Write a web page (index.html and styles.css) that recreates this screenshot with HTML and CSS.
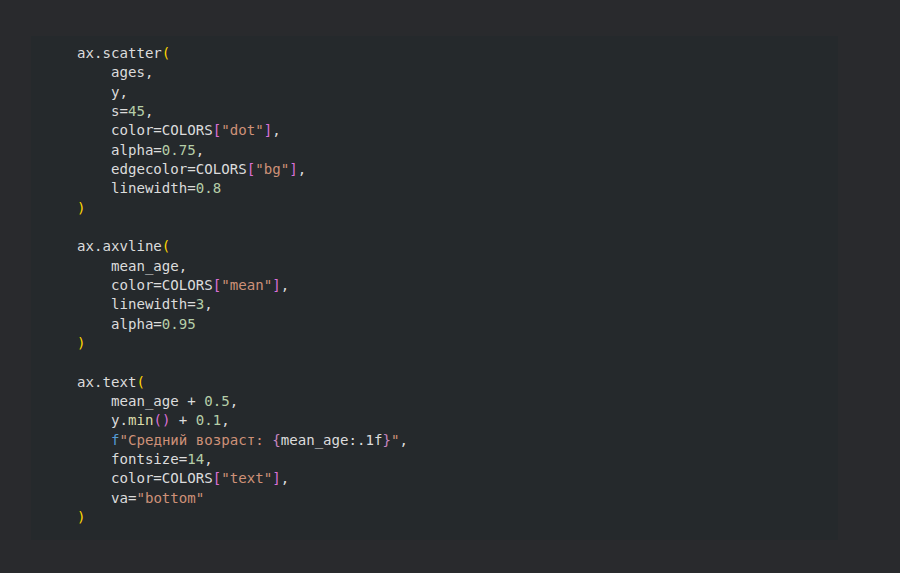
FILE: index.html
```html
<!DOCTYPE html>
<html lang="en">
<head>
<meta charset="utf-8">
<title>Code</title>
<link rel="stylesheet" href="styles.css">
</head>
<body>
<div class="panel">
<pre class="code"><code>ax.scatter<span class="b1">(</span>
    ages,
    y,
    s=<span class="num">45</span>,
    color=COLORS<span class="b2">[</span><span class="str">"dot"</span><span class="b2">]</span>,
    alpha=<span class="num">0.75</span>,
    edgecolor=COLORS<span class="b2">[</span><span class="str">"bg"</span><span class="b2">]</span>,
    linewidth=<span class="num">0.8</span>
<span class="b1">)</span>

ax.axvline<span class="b1">(</span>
    mean_age,
    color=COLORS<span class="b2">[</span><span class="str">"mean"</span><span class="b2">]</span>,
    linewidth=<span class="num">3</span>,
    alpha=<span class="num">0.95</span>
<span class="b1">)</span>

ax.text<span class="b1">(</span>
    mean_age + <span class="num">0.5</span>,
    y.<span class="fn">min</span><span class="b2">()</span> + <span class="num">0.1</span>,
    <span class="kw">f</span><span class="str">"Средний возраст: </span><span class="br">{</span>mean_age:.1f<span class="br">}</span><span class="str">"</span>,
    fontsize=<span class="num">14</span>,
    color=COLORS<span class="b2">[</span><span class="str">"text"</span><span class="b2">]</span>,
    va=<span class="str">"bottom"</span>
<span class="b1">)</span></code></pre>
</div>
</body>
</html>
```
FILE: styles.css
```css
html, body {
  margin: 0;
  padding: 0;
  background: #292a2d;
}
.panel {
  margin: 36px 0 0 31px;
  width: 807px;
  height: 504px;
  background: #25292c;
  box-sizing: border-box;
  padding: 8px 0 0 46px;
}
.code {
  margin: 0;
  font-family: "DejaVu Sans Mono", "Liberation Mono", monospace;
  font-size: 14.1px;
  line-height: 19.33px;
  color: #dcdcdc;
}
.b1 { color: #ffd700; }
.b2 { color: #da70d6; }
.br { color: #c586c0; }
.num { color: #b5cea8; }
.str { color: #ce9178; }
.kw { color: #569cd6; }
.fn { color: #dcdcaa; }
```
